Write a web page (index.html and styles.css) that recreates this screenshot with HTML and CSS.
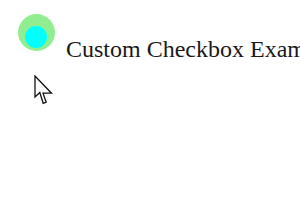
FILE: index.html
```html
<!DOCTYPE html>
<html>
<head>
<meta charset="utf-8">
<link rel="stylesheet" href="styles.css">
</head>
<body>
<div class="row">
  <span class="check"><span class="dot"></span></span>
  <span class="label">Custom Checkbox Example</span>
</div>
<svg class="cursor" width="22" height="32" viewBox="0 0 22 32">
  <path d="M1 1 L1 22 L5.8 17.5 L9.2 28.3 L12.2 27.2 L9 18.2 L17.5 18.2 Z" fill="#fff" stroke="#111" stroke-width="1.3" stroke-linejoin="miter"/>
</svg>
</body>
</html>
```
FILE: styles.css
```css
html, body {
  margin: 0;
  padding: 0;
  background: #fff;
  width: 300px;
  height: 210px;
  overflow: hidden;
  position: relative;
}
.row {
  display: flex;
  align-items: flex-start;
  padding: 14px 0 0 18px;
  white-space: nowrap;
}
.check {
  position: relative;
  width: 37px;
  height: 37px;
  border-radius: 50%;
  background: #90ee90;
  flex: none;
}
.dot {
  position: absolute;
  left: 7px;
  top: 12px;
  width: 22px;
  height: 22px;
  border-radius: 50%;
  background: #00ffff;
}
.label {
  font-family: "Liberation Serif", "Times New Roman", serif;
  font-size: 24px;
  color: #1a1a1a;
  margin-left: 11px;
  margin-top: 23px;
  line-height: 24px;
}
.cursor {
  position: absolute;
  left: 34px;
  top: 75px;
}
```
